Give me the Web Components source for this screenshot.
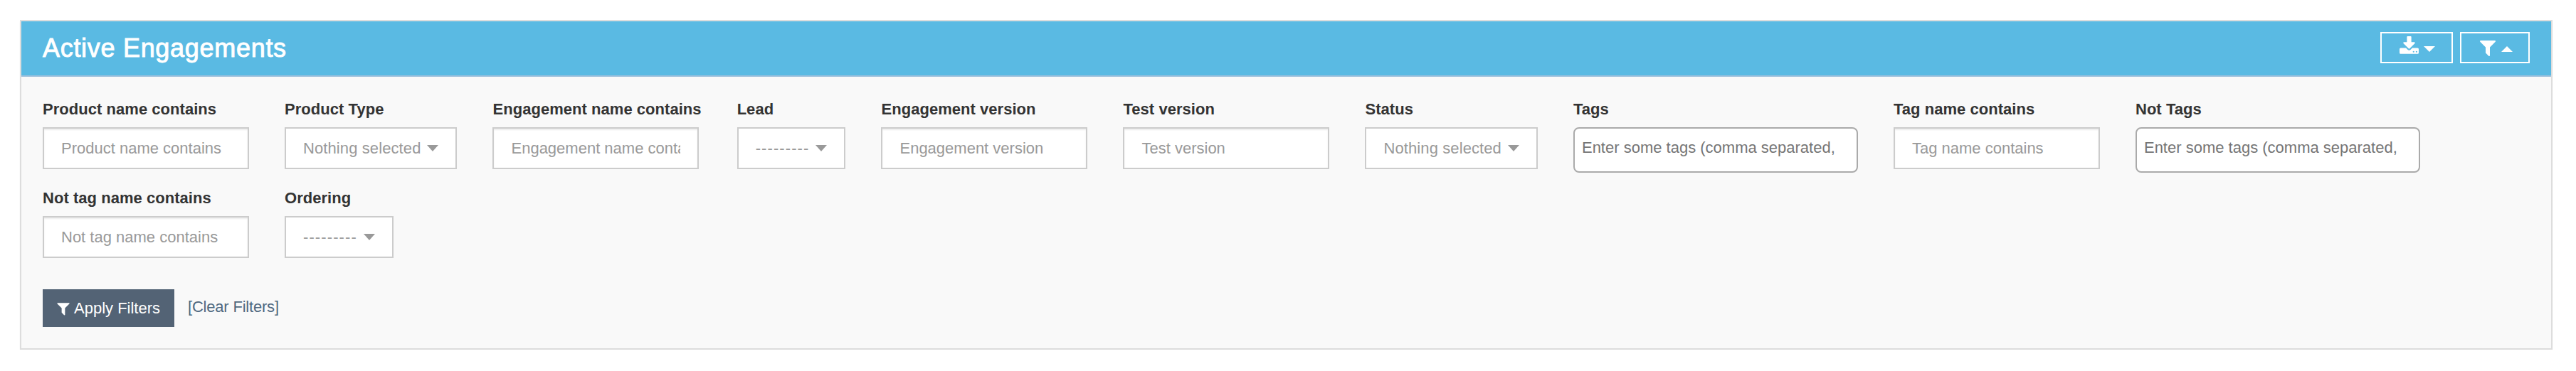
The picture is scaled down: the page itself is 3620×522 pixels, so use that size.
<!DOCTYPE html>
<html><head><meta charset="utf-8"><style>
html,body{margin:0;padding:0;background:#fff}
body{font-family:"Liberation Sans",Arial,sans-serif;color:#333;padding:28px 33px 0 28px}
</style></head><body>
<template id="t-panel"><style>
:host{display:block;border:2px solid #ddd;background:#f9f9f9;box-shadow:0 2px 2px rgba(0,0,0,.05);height:464px;box-sizing:border-box}
header{height:76px;background:#5abae3;border-bottom:2px solid #9bbfdc;display:flex;align-items:center;justify-content:space-between;padding:0 30px}
h1{margin:0;font-size:36px;font-weight:400;color:#fff;-webkit-text-stroke:.9px #fff;letter-spacing:.7px;line-height:40px}
.tools{display:flex;gap:10px;margin-top:-2px}
main{padding:30px 30px 0 30px}
</style><header><h1><slot name="title"></slot></h1><div class="tools"><slot name="tools"></slot></div></header><main><slot></slot></main></template>
<template id="t-tool"><style>
:host{display:flex;align-items:center;justify-content:center;gap:6px;box-sizing:border-box;height:44px;border:2px solid #fff;color:#fff}
::slotted(svg){display:block;fill:#fff}
</style><slot></slot></template>
<template id="t-filters"><style>
:host{display:flex;flex-wrap:wrap;column-gap:50px;row-gap:0;align-items:flex-start}
</style><slot></slot></template>
<template id="t-field"><style>
:host{display:block;height:125px}
label{display:block;font-weight:700;font-size:22px;line-height:26px;letter-spacing:.04px;color:#333;margin:3px 0 12px;white-space:nowrap}
</style><label><slot name="label"></slot></label><slot></slot></template>
<template id="t-input"><style>
:host{display:flex;align-items:center;box-sizing:border-box;width:290px;height:59px;border:2px solid #ccc;background:#fff;box-shadow:inset 0 2px 2px rgba(0,0,0,.075);padding:0 24px;font-size:22px;color:#999;overflow:hidden;white-space:nowrap}
span{display:block;overflow:hidden}
</style><span><slot></slot></span></template>
<template id="t-select"><style>
:host{display:flex;align-items:center;box-sizing:border-box;height:59px;border:2px solid #ccc;background:#fff;padding:0 24px;font-size:22px;letter-spacing:.1px;color:#999;white-space:nowrap;gap:9px}
:host([dashes]){letter-spacing:1.1px}
i{display:block;width:0;height:0;border:8px solid transparent;border-top:9px solid #999;border-bottom:0}
</style><slot></slot><i></i></template>
<template id="t-tags"><style>
:host{display:block;box-sizing:border-box;width:400px;height:64px;border:2px solid #aaa;border-radius:8px;background:#fff;padding:0 10px;font-size:22px;line-height:54px;color:#757575;white-space:nowrap}
</style><slot></slot></template>
<template id="t-actions"><style>
:host{display:flex;align-items:center;gap:19px;margin-top:19px}
</style><slot></slot></template>
<template id="t-apply"><style>
:host{display:flex;align-items:center;gap:4px;box-sizing:border-box;height:53px;width:185px;background:#536375;color:#fff;font-size:22px;padding-left:18px}
::slotted(svg){display:block;fill:#fff}
</style><slot></slot></template>
<template id="t-link"><style>
:host{display:block;font-size:22px;letter-spacing:-.2px;color:#4f6880;margin-top:-3px}
</style><slot></slot></template>

<dd-panel>
<span slot="title">Active Engagements</span>
<dd-tool slot="tools" style="width:102px"><svg width="29" height="29" viewBox="0 0 1792 1792" style="margin-top:-3px"><path d="M1344 1344q0-26-19-45t-45-19-45 19-19 45 19 45 45 19 45-19 19-45zm256 0q0-26-19-45t-45-19-45 19-19 45 19 45 45 19 45-19 19-45zm128-224v320q0 40-28 68t-68 28h-1472q-40 0-68-28t-28-68v-320q0-40 28-68t68-28h465l135 136q58 56 136 56t136-56l136-136h464q40 0 68 28t28 68zm-325-569q17 41-14 70l-448 448q-18 19-45 19t-45-19l-448-448q-31-29-14-70 17-39 59-39h256v-448q0-26 19-45t45-19h256q26 0 45 19t19 45v448h256q42 0 59 39z"/></svg><svg width="16" height="8" viewBox="0 0 16 8" style="margin-top:3px"><path d="M0 0h16L8 8z"/></svg></dd-tool>
<dd-tool slot="tools" style="width:98px;gap:5px"><svg width="28" height="28" viewBox="0 0 1792 1792"><path d="M1595 295q17 41-14 70l-493 493v742q0 42-39 59-13 5-25 5-27 0-45-19l-256-256q-19-19-19-45v-486l-493-493q-31-29-14-70 17-39 59-39h1280q42 0 59 39z"/></svg><svg width="16" height="8" viewBox="0 0 16 8" style="margin-top:3px"><path d="M8 0l8 8H0z"/></svg></dd-tool>
<dd-filters>
<dd-field><span slot="label">Product name contains</span><dd-input>Product name contains</dd-input></dd-field>
<dd-field><span slot="label">Product Type</span><dd-select>Nothing selected</dd-select></dd-field>
<dd-field><span slot="label">Engagement name contains</span><dd-input>Engagement name contains</dd-input></dd-field>
<dd-field><span slot="label">Lead</span><dd-select dashes>---------</dd-select></dd-field>
<dd-field><span slot="label">Engagement version</span><dd-input>Engagement version</dd-input></dd-field>
<dd-field><span slot="label">Test version</span><dd-input>Test version</dd-input></dd-field>
<dd-field><span slot="label">Status</span><dd-select>Nothing selected</dd-select></dd-field>
<dd-field><span slot="label">Tags</span><dd-tags>Enter some tags (comma separated,</dd-tags></dd-field>
<dd-field><span slot="label">Tag name contains</span><dd-input>Tag name contains</dd-input></dd-field>
<dd-field><span slot="label">Not Tags</span><dd-tags>Enter some tags (comma separated,</dd-tags></dd-field>
<dd-field><span slot="label">Not tag name contains</span><dd-input>Not tag name contains</dd-input></dd-field>
<dd-field><span slot="label">Ordering</span><dd-select dashes>---------</dd-select></dd-field>
</dd-filters>
<dd-actions>
<dd-apply><svg width="22" height="22" viewBox="0 0 1792 1792"><path d="M1595 295q17 41-14 70l-493 493v742q0 42-39 59-13 5-25 5-27 0-45-19l-256-256q-19-19-19-45v-486l-493-493q-31-29-14-70 17-39 59-39h1280q42 0 59 39z"/></svg>Apply Filters</dd-apply>
<dd-link>[Clear Filters]</dd-link>
</dd-actions>
</dd-panel>
<script>
const map={panel:'dd-panel',tool:'dd-tool',filters:'dd-filters',field:'dd-field',input:'dd-input',select:'dd-select',tags:'dd-tags',actions:'dd-actions',apply:'dd-apply',link:'dd-link'};
for(const [k,tag] of Object.entries(map)){
  customElements.define(tag,class extends HTMLElement{
    constructor(){super();this.attachShadow({mode:'open'}).appendChild(document.getElementById('t-'+k).content.cloneNode(true));}
  });
}
</script>
</body></html>
